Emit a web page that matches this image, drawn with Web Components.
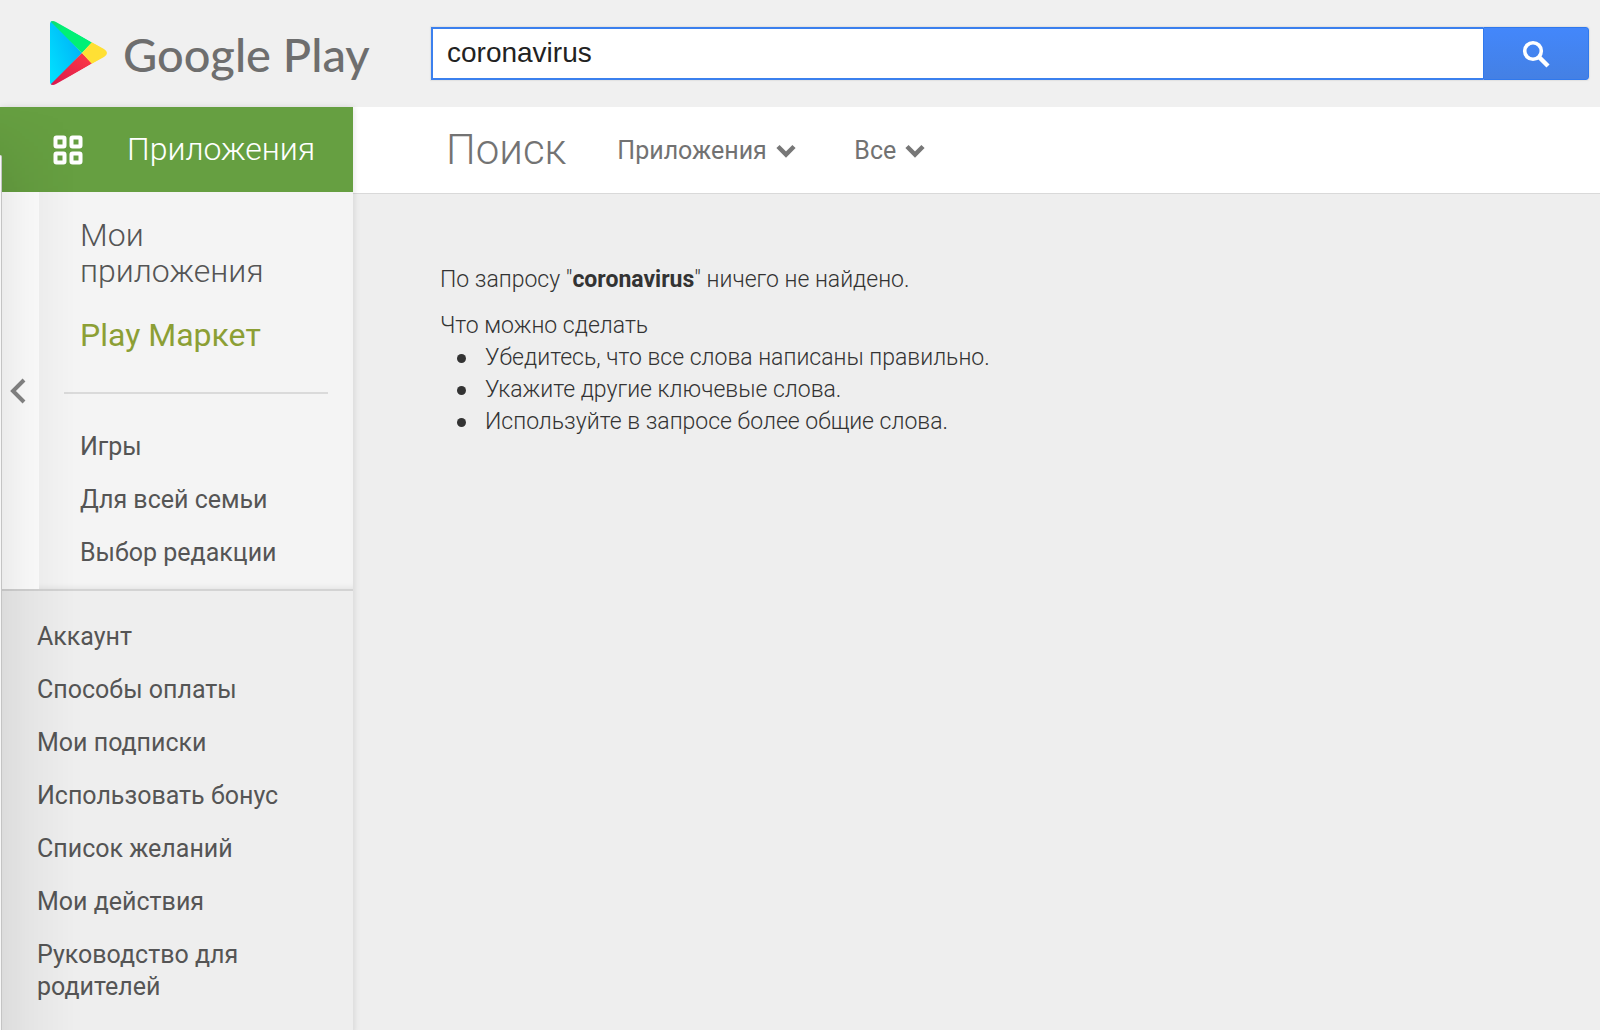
<!DOCTYPE html>
<html lang="ru">
<head>
<meta charset="utf-8">
<title>coronavirus – Google Play</title>
<style>
html, body { margin: 0; height: 100%; }
body { font-family: Roboto, "Liberation Sans", sans-serif; background: #eee; color: #333; }
</style>
</head>
<body>
<play-app></play-app>
<script>
const define = (name, html) => customElements.define(name, class extends HTMLElement {
  constructor() {
    super();
    const t = document.createElement('template');
    t.innerHTML = html;
    this.attachShadow({ mode: 'open' }).append(t.content.cloneNode(true));
  }
});

define('play-logo', `
<style>
:host { display: block; }
a { display: flex; align-items: center; gap: 16px; color: #6e6e6e; text-decoration: none; }
svg { display: block; flex: none; }
span { padding-top: 2px; font: 500 47px/60px Lato, "Liberation Sans", sans-serif; white-space: nowrap; }
</style>
<a href="#">
<svg width="58" height="66" viewBox="0 0 58 66" aria-hidden="true">
  <defs>
    <linearGradient id="b" x1="1" y1="0" x2="0" y2=".8"><stop offset="0" stop-color="#00a8f5"/><stop offset="1" stop-color="#00e0ff"/></linearGradient>
    <linearGradient id="r" x1="1" y1="0" x2="0" y2="1"><stop offset="0" stop-color="#ff3a44"/><stop offset="1" stop-color="#d8184f"/></linearGradient>
    <linearGradient id="g" x1="0" y1="0" x2=".6" y2=".6"><stop offset="0" stop-color="#12d874"/><stop offset=".5" stop-color="#00f076"/></linearGradient>
    <clipPath id="c"><path d="M1 4Q1 1 4 1Q5 1 7 2L55 29Q58 31 58 33Q58 35 55 37L7 64Q5 65 4 65Q1 65 1 62Z"/></clipPath>
  </defs>
  <g clip-path="url(#c)">
    <path fill="url(#b)" d="M0 0H2L33 33L2 66H0Z"/>
    <path fill="url(#g)" d="M1 0H5L43 22.500L33 33L1 1Z"/>
    <path fill="url(#r)" d="M1 66H5L43 43.500L33 33L1 65Z"/>
    <path fill="#ffe034" d="M43 22L58 30V36L43 44L33 33Z"/>
  </g>
</svg>
<span>Google Play</span>
</a>`);

define('play-search', `
<style>
:host { display: block; min-width: 0; }
form { display: flex; height: 53px; border-radius: 0 3px 3px 0; box-shadow: 0 0 1px 1px #e2e2e2; }
input { flex: 1; min-width: 0; box-sizing: border-box; border: 2px solid #3b80ee; border-right: 0; background: #fff; padding: 0 14px 2px; margin: 0; outline: 0; border-radius: 0; color: #222; font: 28px "Liberation Sans", Arial, sans-serif; }
button { width: 106px; border: 1px solid #3079ed; border-radius: 0 3px 3px 0; background: linear-gradient(#4387fb, #4480e4); padding: 0; display: flex; align-items: center; justify-content: center; }
</style>
<form role="search" onsubmit="return false">
<input type="text" aria-label="Поиск" value="coronavirus">
<button type="submit" aria-label="Искать"><svg width="28" height="28" viewBox="0 0 28 28" fill="none" stroke="#fff"><circle cx="11" cy="11" r="8.300" stroke-width="3.600"/><path d="M17 17L26 26" stroke-width="4.400"/></svg></button>
</form>`);

define('play-header', `
<style>
:host { display: grid; grid-template-columns: 382px 1fr; align-items: center; height: 107px; padding: 0 11px 0 49px; box-sizing: border-box; background: #f0f0f0; }
play-logo { padding-bottom: 2px; }
</style>
<play-logo></play-logo><play-search></play-search>`);

define('nav-link', `
<style>
:host { display: block; font-size: 25px; line-height: 32px; color: #555; }
:host([large]) { font-size: 32px; line-height: 36px; font-weight: 300; }
:host([active]) { color: #8c9f35; font-weight: 400; }
a { display: block; color: inherit; text-decoration: none; }
</style>
<a href="#"><slot></slot></a>`);

define('play-sidebar', `
<style>
:host { display: flex; flex-direction: column; position: relative; background: #eee; box-shadow: 1px 0 6px #0000001c; }
.apps { height: 85px; box-sizing: border-box; padding-left: 53px; display: flex; align-items: center; gap: 44px; background: #669f41; color: #fff; font-size: 32px; font-weight: 300; text-decoration: none; }
.apps span { padding-bottom: 2px; }
.store { display: flex; background: #f4f4f4; border-bottom: 2px solid #d3d3d3; box-shadow: inset 0 -6px 6px -5px #00000014; }
.collapse { width: 39px; padding: 0 0 0 10px; border: 0; background: #fff; display: flex; align-items: center; }
nav { flex: 1; display: flex; flex-direction: column; }
.top { padding: 25px 25px 20px; }
.large { display: grid; gap: 28px; padding: 0 16px 39px; border-bottom: 2px solid #dadada; }
.items { display: grid; gap: 21px; }
.top .items { padding: 37px 16px 0; }
.account { padding: 30px 37px 32px; }
.shade { position: absolute; inset: 0 auto 0 0; width: 75px; pointer-events: none; background: linear-gradient(to right, #00000014, #0000000a 35%, #0000 100%); -webkit-mask: linear-gradient(#0000, #000 90px); mask: linear-gradient(#0000, #000 90px); }
.edge { position: absolute; inset: 48px auto 0 0; width: 2px; pointer-events: none; background: #f7f7f7; border-right: 1px solid #c4c4c4; border-radius: 0 3px 0 0; box-sizing: border-box; }
</style>
<a class="apps" href="#"><svg width="30" height="30" viewBox="0 0 30 30" fill="none" stroke="#fff" stroke-width="4"><rect x="2.500" y="2.500" width="9" height="9" rx="1"/><rect x="18.500" y="2.500" width="9" height="9" rx="1"/><rect x="2.500" y="18.500" width="9" height="9" rx="1"/><rect x="18.500" y="18.500" width="9" height="9" rx="1"/></svg><span>Приложения</span></a>
<div class="store">
<button class="collapse" aria-label="Свернуть"><svg width="16" height="26" viewBox="0 0 16 26" fill="none" stroke="#858585" stroke-width="4"><path d="M14 2L3 13L14 24"/></svg></button>
<nav class="top">
<div class="large"><nav-link large>Мои приложения</nav-link><nav-link large active>Play Маркет</nav-link></div>
<div class="items"><nav-link>Игры</nav-link><nav-link>Для всей семьи</nav-link><nav-link>Выбор редакции</nav-link></div>
</nav>
</div>
<nav class="account"><div class="items">
<nav-link>Аккаунт</nav-link><nav-link>Способы оплаты</nav-link><nav-link>Мои подписки</nav-link><nav-link>Использовать бонус</nav-link><nav-link>Список желаний</nav-link><nav-link>Мои действия</nav-link><nav-link>Руководство для родителей</nav-link>
</div></nav>
<div class="shade"></div><div class="edge"></div>`);

customElements.define('filter-select', class extends HTMLElement {
  constructor() {
    super();
    this.attachShadow({ mode: 'open' }).innerHTML = `
<style>
:host { display: block; }
label { display: flex; align-items: center; gap: 9px; }
select { appearance: none; border: 0; background: none; padding: 0; margin: 0; color: #727272; font: 25px/32px Roboto, sans-serif; }
</style>
<label><select aria-label="${this.getAttribute('label')}"><option>${this.getAttribute('value')}</option></select>
<svg width="20" height="14" viewBox="0 0 20 14" fill="none" stroke="#777" stroke-width="4.500"><path d="M2 2.500L10 10.500L18 2.500"/></svg></label>`;
  }
});

define('play-toolbar', `
<style>
:host { display: flex; align-items: center; height: 86px; padding-left: 93px; background: #fff; border-bottom: 1px solid #d9d9d9; }
h1 { margin: 0 51px 0 0; font-size: 42px; font-weight: 300; line-height: 52px; color: #737373; }
.filters { display: flex; gap: 58px; padding-top: 2px; }
</style>
<h1>Поиск</h1>
<div class="filters"><filter-select label="Категория" value="Приложения"></filter-select><filter-select label="Цена" value="Все"></filter-select></div>`);

define('search-results', `
<style>
:host { display: block; padding: 70px 87px; font-size: 23px; line-height: 32px; font-weight: 300; color: #333; }
p { margin: 0 0 14px; }
p.hint { margin: 0; }
b { font-weight: 700; }
ul { margin: 0; padding: 0; list-style: none; }
li { display: flex; align-items: center; gap: 19px; padding-left: 17px; }
li::before { content: ""; width: 9px; height: 9px; border-radius: 50%; background: #333; }
</style>
<p>По запросу "<b>coronavirus</b>" ничего не найдено.</p>
<p class="hint">Что можно сделать</p>
<ul><li>Убедитесь, что все слова написаны правильно.</li><li>Укажите другие ключевые слова.</li><li>Используйте в запросе более общие слова.</li></ul>`);

define('play-app', `
<style>
:host { display: flex; flex-direction: column; min-height: 100%; }
.body { flex: 1; display: grid; grid-template-columns: 353px 1fr; }
</style>
<play-header></play-header>
<div class="body"><play-sidebar></play-sidebar><main><play-toolbar></play-toolbar><search-results></search-results></main></div>`);
</script>
</body>
</html>
